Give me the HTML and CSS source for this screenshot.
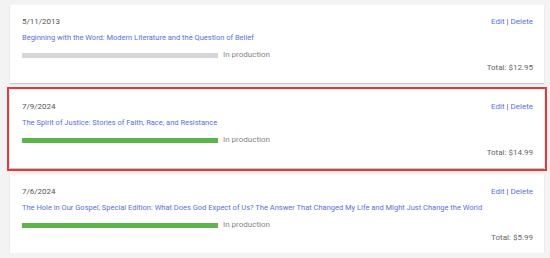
FILE: index.html
```html
<!DOCTYPE html>
<html>
<head>
<meta charset="utf-8">
<link rel="stylesheet" href="styles.css">
</head>
<body>
<div class="list">
  <div class="card">
    <div class="date">5/11/2013</div>
    <div class="actions"><a class="link" href="#">Edit</a> <span class="sep">|</span> <a class="link" href="#">Delete</a></div>
    <a class="title link" href="#">Beginning with the Word: Modern Literature and the Question of Belief</a>
    <div class="progress"><div class="bar bar-grey"></div><span class="status">In production</span></div>
    <div class="total">Total: $12.95</div>
  </div>
  <div class="card selected">
    <div class="date">7/9/2024</div>
    <div class="actions"><a class="link" href="#">Edit</a> <span class="sep">|</span> <a class="link" href="#">Delete</a></div>
    <a class="title link" href="#">The Spirit of Justice: Stories of Faith, Race, and Resistance</a>
    <div class="progress"><div class="bar bar-green"></div><span class="status">In production</span></div>
    <div class="total">Total: $14.99</div>
  </div>
  <div class="card">
    <div class="date">7/6/2024</div>
    <div class="actions"><a class="link" href="#">Edit</a> <span class="sep">|</span> <a class="link" href="#">Delete</a></div>
    <a class="title link" href="#">The Hole in Our Gospel, Special Edition: What Does God Expect of Us? The Answer That Changed My Life and Might Just Change the World</a>
    <div class="progress"><div class="bar bar-green"></div><span class="status">In production</span></div>
    <div class="total">Total: $5.99</div>
  </div>
</div>
</body>
</html>
```
FILE: styles.css
```css
html, body {
  margin: 0;
  padding: 0;
  background: #f3f3f3;
}
body {
  font-family: Roboto, "Liberation Sans", sans-serif;
  font-size: 8px;
  color: #555;
}
.list {
  display: flex;
  flex-direction: column;
  gap: 7px;
  padding: 5px 6px 0 10px;
}
.card {
  display: grid;
  grid-template-columns: 1fr auto;
  grid-template-rows: auto auto auto auto;
  padding: 11px 11px 9px 12px;
  background: #fff;
  box-shadow: 0 1px 1px rgba(0,0,0,0.18);
  line-height: 12px;
}
.selected {
  outline: 2px solid #e03a3e;
  outline-offset: 1px;
}
.date {
  grid-column: 1;
  grid-row: 1;
}
.actions {
  grid-column: 2;
  grid-row: 1;
  justify-self: end;
}
.link {
  color: #5a6fe0;
  text-decoration: none;
}
.sep {
  color: #555;
}
.title {
  grid-column: 1 / 3;
  grid-row: 2;
  justify-self: start;
  margin-top: 4px;
  font-size: 7.5px;
}
.progress {
  grid-column: 1;
  grid-row: 3;
  margin-top: 5px;
  display: flex;
  align-items: center;
  gap: 5px;
}
.bar {
  width: 196px;
  height: 5px;
}
.bar-grey {
  background: #d6d6d6;
}
.bar-green {
  background: #5cb548;
}
.status {
  color: #858585;
}
.total {
  grid-column: 2;
  grid-row: 4;
  justify-self: end;
  margin-top: 1px;
  color: #666;
}
```
